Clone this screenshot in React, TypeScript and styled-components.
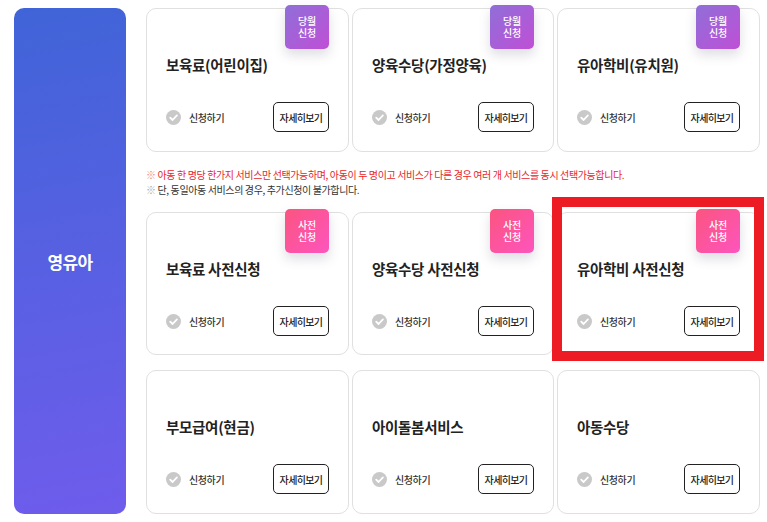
import React from "react";
import styled, { createGlobalStyle } from "styled-components";

const Global = createGlobalStyle`
  html, body { margin: 0; padding: 0; background: #fff; }
  body { font-family: "Noto Sans CJK KR", "Noto Sans", sans-serif; color: #222; }
  * { box-sizing: border-box; }
`;

const Page = styled.div`
  position: relative;
  width: 767px;
  height: 522px;
  overflow: hidden;
  display: flex;
  gap: 20px;
  padding: 8px 7px 8px 14px;
`;

const Side = styled.div`
  width: 112px;
  height: 506px;
  border-radius: 10px;
  background: linear-gradient(170deg, #4064d8 0%, #6f5cec 100%);
  color: #fff;
  font-size: 17px;
  font-weight: 700;
  letter-spacing: -0.6px;
  display: flex;
  align-items: center;
  justify-content: center;
`;

const Main = styled.div`
  width: 614px;
  display: flex;
  flex-direction: column;
`;

const Row = styled.div<{ $mt?: number }>`
  display: grid;
  grid-template-columns: 203px 202px 203px;
  column-gap: 3px;
  margin-top: ${(p) => p.$mt ?? 0}px;
`;

const Card = styled.div<{ $h: number }>`
  position: relative;
  height: ${(p) => p.$h}px;
  border: 1px solid #e0e0e0;
  border-radius: 10px;
  padding: 43px 19px 0;
  display: flex;
  flex-direction: column;
`;

const Badge = styled.div<{ $pre: boolean }>`
  position: absolute;
  top: -4px;
  right: 19px;
  width: 44px;
  height: 44px;
  border-radius: 5px;
  background: ${(p) =>
    p.$pre
      ? "linear-gradient(135deg, #fb5480 0%, #fd55bd 100%)"
      : "linear-gradient(135deg, #8f6fd8 0%, #c04fd6 100%)"};
  box-shadow: 0 6px 12px rgba(90, 90, 120, 0.2);
  color: #fff;
  font-size: 10px;
  font-weight: 500;
  line-height: 12px;
  letter-spacing: -0.2px;
  text-align: center;
  display: flex;
  align-items: center;
  justify-content: center;
`;

const Title = styled.div`
  font-size: 14.5px;
  font-weight: 700;
  line-height: 26px;
  letter-spacing: -0.3px;
  color: #222;
  white-space: nowrap;
`;

const Bottom = styled.div`
  display: flex;
  align-items: center;
  justify-content: space-between;
  margin-top: 24px;
`;

const Apply = styled.div`
  display: flex;
  align-items: center;
  gap: 8px;
  font-size: 10px;
  font-weight: 500;
  letter-spacing: -0.4px;
  color: #333;
`;

const Detail = styled.div`
  width: 56px;
  height: 30px;
  border: 1px solid #222;
  border-radius: 5px;
  font-size: 10px;
  font-weight: 500;
  letter-spacing: -0.65px;
  color: #222;
  display: flex;
  align-items: center;
  justify-content: center;
  white-space: nowrap;
`;

const Notes = styled.div`
  height: 60px;
  padding-top: 15px;
  font-size: 10px;
  line-height: 15px;
  letter-spacing: -0.38px;
  white-space: nowrap;
`;

const Note = styled.div<{ $red?: boolean }>`
  color: ${(p) => (p.$red ? "#e8262a" : "#333")};
`;

const Mark = styled.span<{ $red?: boolean }>`
  color: ${(p) => (p.$red ? "#f08a80" : "#aaa")};
`;

const Highlight = styled.div`
  position: absolute;
  left: 552px;
  top: 197px;
  width: 212px;
  height: 164px;
  border: 10px solid #ed1c24;
  pointer-events: none;
`;

const Check = () => (
  <svg width="15" height="15" viewBox="0 0 15 15" aria-hidden="true">
    <circle cx="7.5" cy="7.5" r="7.5" fill="#c9c9c9" />
    <path d="M4.2 7.6 6.6 10 10.9 5.4" fill="none" stroke="#fff" strokeWidth="1.8" strokeLinecap="round" strokeLinejoin="round" />
  </svg>
);

type Item = { title: string; badge?: string[] };

const monthRow: Item[] = [
  { title: "보육료(어린이집)", badge: ["당월", "신청"] },
  { title: "양육수당(가정양육)", badge: ["당월", "신청"] },
  { title: "유아학비(유치원)", badge: ["당월", "신청"] },
];

const preRow: Item[] = [
  { title: "보육료 사전신청", badge: ["사전", "신청"] },
  { title: "양육수당 사전신청", badge: ["사전", "신청"] },
  { title: "유아학비 사전신청", badge: ["사전", "신청"] },
];

const lastRow: Item[] = [
  { title: "부모급여(현금)" },
  { title: "아이돌봄서비스" },
  { title: "아동수당" },
];

const ServiceCard = ({ item, h }: { item: Item; h: number }) => (
  <Card $h={h}>
    {item.badge && (
      <Badge $pre={item.badge[0] === "사전"}>
        {item.badge[0]}
        <br />
        {item.badge[1]}
      </Badge>
    )}
    <Title>{item.title}</Title>
    <Bottom>
      <Apply>
        <Check />
        신청하기
      </Apply>
      <Detail>자세히보기</Detail>
    </Bottom>
  </Card>
);

export default function App() {
  return (
    <Page>
      <Global />
      <Side>영유아</Side>
      <Main>
        <Row>
          {monthRow.map((it) => (
            <ServiceCard key={it.title} item={it} h={144} />
          ))}
        </Row>
        <Notes>
          <Note $red>
            <Mark $red>※</Mark> 아동 한 명당 한가지 서비스만 선택가능하며, 아동이 두 명이고 서비스가 다른 경우 여러 개 서비스를 동시 선택가능합니다.
          </Note>
          <Note>
            <Mark>※</Mark> 단, 동일아동 서비스의 경우, 추가신청이 불가합니다.
          </Note>
        </Notes>
        <Row>
          {preRow.map((it) => (
            <ServiceCard key={it.title} item={it} h={143} />
          ))}
        </Row>
        <Row $mt={15}>
          {lastRow.map((it) => (
            <ServiceCard key={it.title} item={it} h={144} />
          ))}
        </Row>
      </Main>
      <Highlight />
    </Page>
  );
}
